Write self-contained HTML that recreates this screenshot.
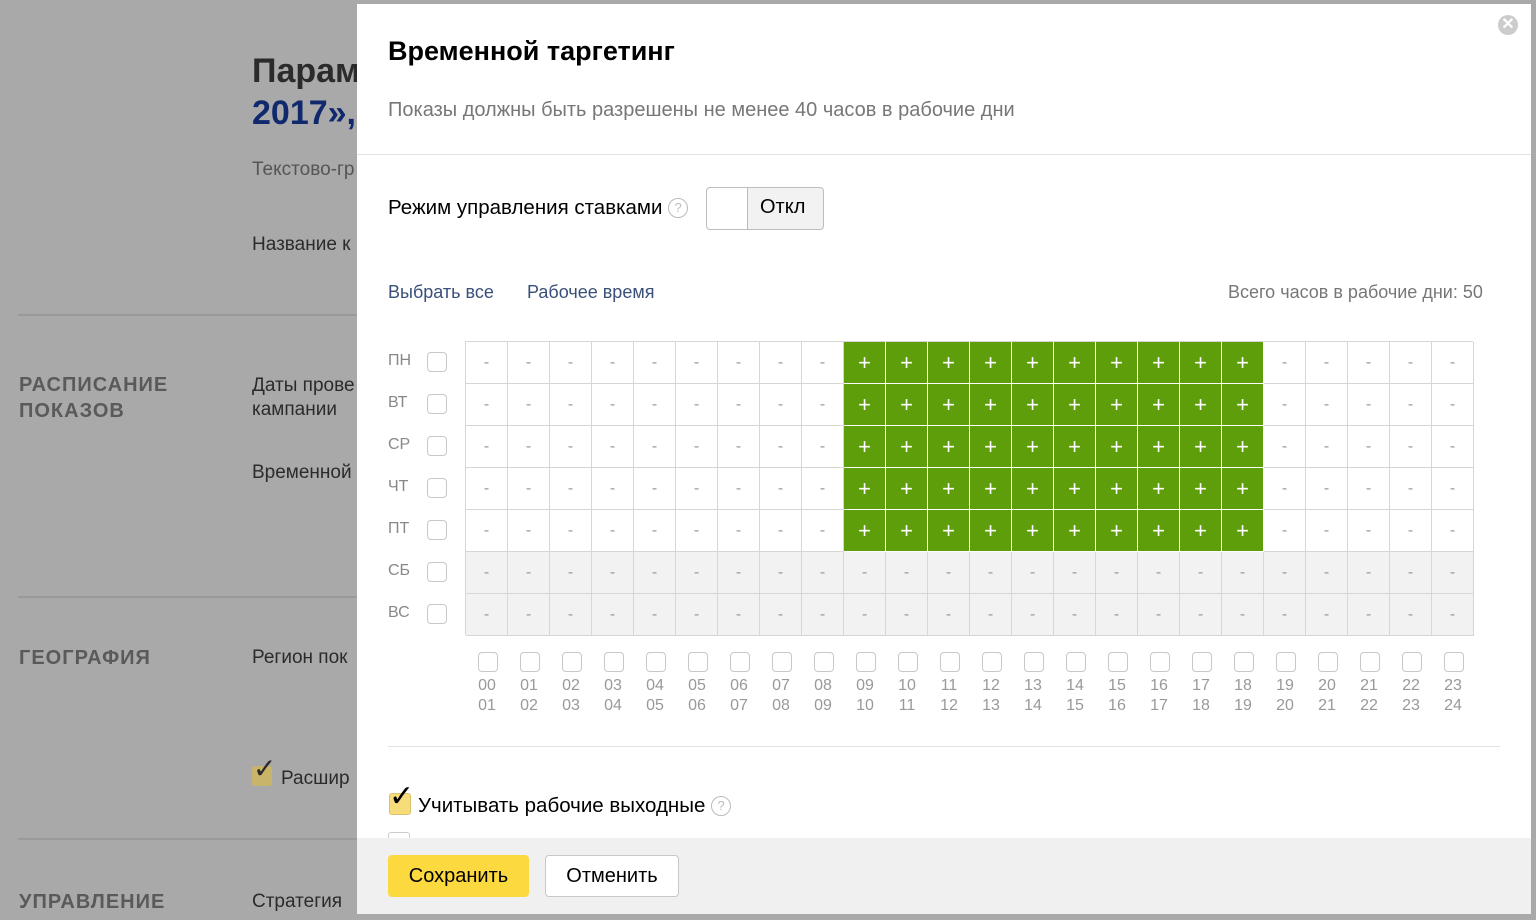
<!DOCTYPE html>
<html><head><meta charset="utf-8"><style>
body{margin:0;width:1536px;height:920px;overflow:hidden;background:#a9a9a9;font-family:"Liberation Sans",sans-serif;position:relative}
.a{position:absolute;white-space:nowrap}
.bg{color:#2b2b2b}
.sec{color:#5a5a5a;font-weight:bold;font-size:20px;letter-spacing:1px;line-height:26px}
.hl{position:absolute;left:18px;width:340px;height:2px;background:#9a9a9a}
#m{position:absolute;left:357px;top:4px;width:1174px;height:910px;background:#fff;overflow:hidden}
.cell{position:absolute;width:41px;height:41px;border-right:1px solid #d6d6d6;border-bottom:1px solid #d6d6d6;text-align:center;line-height:41px;color:#999;font-size:16px}
.g{background:#5e9e0a;color:#fff;font-size:22px;border-color:#fff}
.w{background:#f2f2f2}
.cb{position:absolute;width:18px;height:18px;border:1px solid #c8c8c8;border-radius:4px;background:#fff}
.day{position:absolute;color:#888;font-size:16px}
.hr{position:absolute;color:#999;font-size:16px;line-height:20px;text-align:center;width:30px}
.q{display:inline-block;width:18px;height:18px;border:1px solid #bbb;border-radius:50%;color:#bbb;font-size:13px;line-height:18px;text-align:center;vertical-align:2px}
</style></head><body>
<div class="a bg" style="left:252px;top:52px;font-size:34px;font-weight:bold">Парам</div>
<div class="a" style="left:252px;top:94px;font-size:34px;font-weight:bold;color:#10296e">2017»,</div>
<div class="a" style="left:252px;top:159px;font-size:19px;color:#555">Текстово-гр</div>
<div class="a bg" style="left:252px;top:234px;font-size:19px">Название к</div>
<div class="hl" style="top:314px"></div>
<div class="a sec" style="left:19px;top:372px">РАСПИСАНИЕ<br>ПОКАЗОВ</div>
<div class="a bg" style="left:252px;top:374px;font-size:19px;line-height:24px">Даты прове<br>кампании</div>
<div class="a bg" style="left:252px;top:462px;font-size:19px">Временной</div>
<div class="hl" style="top:596px"></div>
<div class="a sec" style="left:19px;top:645px">ГЕОГРАФИЯ</div>
<div class="a bg" style="left:252px;top:647px;font-size:19px">Регион пок</div>
<div class="a" style="left:252px;top:766px;width:20px;height:20px;background:#c9b56a;border-radius:3px"></div>
<div class="a bg" style="left:253px;top:752px;font-size:28px">✓</div>
<div class="a bg" style="left:281px;top:768px;font-size:19px">Расшир</div>
<div class="hl" style="top:838px"></div>
<div class="a sec" style="left:19px;top:889px">УПРАВЛЕНИЕ</div>
<div class="a bg" style="left:252px;top:891px;font-size:19px">Стратегия</div>

<div id="m">
<div class="a" style="left:31px;top:32px;font-size:27px;font-weight:bold;color:#000">Временной таргетинг</div>
<div class="a" style="left:31px;top:95px;font-size:20px;color:#777">Показы должны быть разрешены не менее 40 часов в рабочие дни</div>
<div class="a" style="left:1141px;top:11px;width:20px;height:20px;border-radius:50%;background:#ccc;color:#fff;font-size:16px;line-height:20px;text-align:center;font-weight:bold">✕</div>
<div class="a" style="left:0;top:150px;width:1174px;height:1px;background:#e3e3e3"></div>
<div class="a" style="left:31px;top:192px;font-size:20.5px;color:#000">Режим управления ставками <span class="q">?</span></div>
<div class="a" style="left:349px;top:183px;width:116px;height:41px;border:1px solid #bdbdbd;border-radius:4px;background:#f2f2f2"></div>
<div class="a" style="left:350px;top:184px;width:40px;height:41px;border-right:1px solid #bbb;border-radius:4px 0 0 4px;background:#fff"></div>
<div class="a" style="left:403px;top:192px;font-size:20px;color:#000">Откл</div>
<div class="a" style="left:31px;top:278px;font-size:18px;color:#3a4f7a">Выбрать все</div>
<div class="a" style="left:170px;top:278px;font-size:18px;color:#3a4f7a">Рабочее время</div>
<div class="a" style="left:871px;top:278px;font-size:18px;color:#777">Всего часов в рабочие дни: 50</div>
<div id="grid" class="a" style="left:108px;top:337px;width:1007px;height:293px;border-left:1px solid #d6d6d6;border-top:1px solid #d6d6d6"></div>
<div class="a" style="left:31px;top:742px;width:1112px;height:1px;background:#e3e3e3"></div>
<div class="a" style="left:32px;top:789px;width:20px;height:20px;background:#f7dc7a;border:1px solid #d8c070;border-radius:3px"></div>
<div class="a" style="left:32px;top:775px;font-size:30px;color:#000">✓</div>
<div class="a" style="left:61px;top:790px;font-size:20.5px;color:#000">Учитывать рабочие выходные <span class="q">?</span></div>
<div class="a" style="left:31px;top:828px;width:20px;height:20px;border:1px solid #ccc;border-radius:3px"></div>
<div class="a" style="left:0;top:834px;width:1174px;height:76px;background:#f0f0f0"></div>
<div class="a" style="left:31px;top:851px;width:141px;height:42px;background:#fcd93f;border-radius:4px;font-size:20px;line-height:42px;text-align:center;color:#000">Сохранить</div>
<div class="a" style="left:188px;top:851px;width:132px;height:40px;background:#fff;border:1px solid #c8c8c8;border-radius:4px;font-size:20px;line-height:40px;text-align:center;color:#000">Отменить</div>
<div id="extra"></div>
</div>
<script>
var g=document.getElementById('grid'),h='';
var days=['ПН','ВТ','СР','ЧТ','ПТ','СБ','ВС'];
for(var r=0;r<7;r++)for(var c=0;c<24;c++){var green=r<5&&c>=9&&c<=18;
h+='<div class="cell '+(green?'g':(r>=5?'w':''))+'" style="left:'+(c*42)+'px;top:'+(r*42)+'px">'+(green?'+':'-')+'</div>';}
g.innerHTML=h;
var e='';
for(var r=0;r<7;r++){e+='<div class="day" style="left:31px;top:'+(348+r*42)+'px">'+days[r]+'</div><div class="cb" style="left:70px;top:'+(348+r*42)+'px"></div>';}
for(var c=0;c<24;c++){var x=130+c*42;var p=function(n){return (n<10?'0':'')+n};
e+='<div class="cb" style="left:'+(x-9)+'px;top:648px"></div><div class="hr" style="left:'+(x-15)+'px;top:672px">'+p(c)+'<br>'+p(c+1)+'</div>';}
document.getElementById('extra').innerHTML=e;
</script>
</body></html>
